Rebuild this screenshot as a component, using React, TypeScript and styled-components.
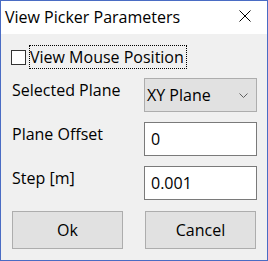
import React from 'react';
import styled, {createGlobalStyle} from "styled-components";

const GlobalStyle = createGlobalStyle`
  html, body {
    margin: 0;
    padding: 0;
    background: #f0f0f0;
  }
  * {
    box-sizing: border-box;
  }
`

export default function App() {
    return (
        <>
            <GlobalStyle/>
            <Window>
                <TitleBar>
                    <Title>View Picker Parameters</Title>
                    <CloseButton>
                        <svg width="12" height="12" viewBox="0 0 12 12">
                            <path d="M0.5 0.5 L11.5 11.5 M11.5 0.5 L0.5 11.5" stroke="#000" strokeWidth="1" fill="none"/>
                        </svg>
                    </CloseButton>
                </TitleBar>
                <Body>
                    <CheckRow>
                        <CheckBox/>
                        <FocusLabel>View Mouse Position</FocusLabel>
                    </CheckRow>
                    <Row>
                        <Label>Selected Plane</Label>
                        <Select>
                            <span>XY Plane</span>
                            <svg width="9" height="5" viewBox="0 0 9 5">
                                <path d="M0.5 0.5 L4.5 4.5 L8.5 0.5" stroke="#606060" strokeWidth="1" fill="none"/>
                            </svg>
                        </Select>
                    </Row>
                    <Row>
                        <Label>Plane Offset</Label>
                        <Input>0</Input>
                    </Row>
                    <Row>
                        <Label>Step [m]</Label>
                        <Input>0.001</Input>
                    </Row>
                    <Buttons>
                        <Button>Ok</Button>
                        <Button>Cancel</Button>
                    </Buttons>
                </Body>
            </Window>
        </>
    );
}

const Window = styled.div`
  width: 268px;
  height: 261px;
  border: 1px solid #4a6cc4;
  background: #f0f0f0;
  font-family: "Open Sans", "Noto Sans", sans-serif;
  color: #000;
  display: flex;
  flex-direction: column;
`
const TitleBar = styled.div`
  height: 33px;
  background: #fff;
  display: flex;
  align-items: center;
  justify-content: space-between;
  padding: 0 16px 0 4px;
`
const Title = styled.span`
  font-size: 16px;
  margin-top: -2px;
`
const CloseButton = styled.span`
  display: flex;
  margin-top: -3px;
`
const Body = styled.div`
  padding: 11px 10px 0 10px;
  display: flex;
  flex-direction: column;
`
const CheckRow = styled.div`
  display: flex;
  align-items: center;
  height: 24px;
`
const CheckBox = styled.span`
  width: 15px;
  height: 15px;
  border: 1px solid #333;
  background: #fff;
  margin-right: 3px;
`
const FocusLabel = styled.span`
  font-size: 16px;
  line-height: 22px;
  padding: 0 2px 0 0;
  border: 1px dotted #000;
  height: 24px;
`
const Row = styled.div`
  display: flex;
  justify-content: space-between;
  margin-top: 9px;
  & + & {
    margin-top: 10px;
  }
`
const Label = styled.span`
  font-size: 16px;
  padding: 1px 0 0 1px;
`
const Field = styled.div`
  width: 113px;
  height: 34px;
  display: flex;
  align-items: center;
  font-size: 16px;
`
const Select = styled(Field)`
  background: #e1e1e1;
  border: 1px solid #adadad;
  justify-content: space-between;
  padding: 0 8px 0 2px;
`
const Input = styled(Field)`
  background: #fff;
  border: 1px solid #7a7a7a;
  padding: 0 6px;
`
const Buttons = styled.div`
  display: flex;
  justify-content: space-between;
  margin-top: 11px;
  padding: 0 1px 0 1px;
`
const Button = styled.div`
  width: 111px;
  height: 38px;
  background: #e1e1e1;
  border: 1px solid #adadad;
  display: flex;
  align-items: center;
  justify-content: center;
  font-size: 16px;
`
